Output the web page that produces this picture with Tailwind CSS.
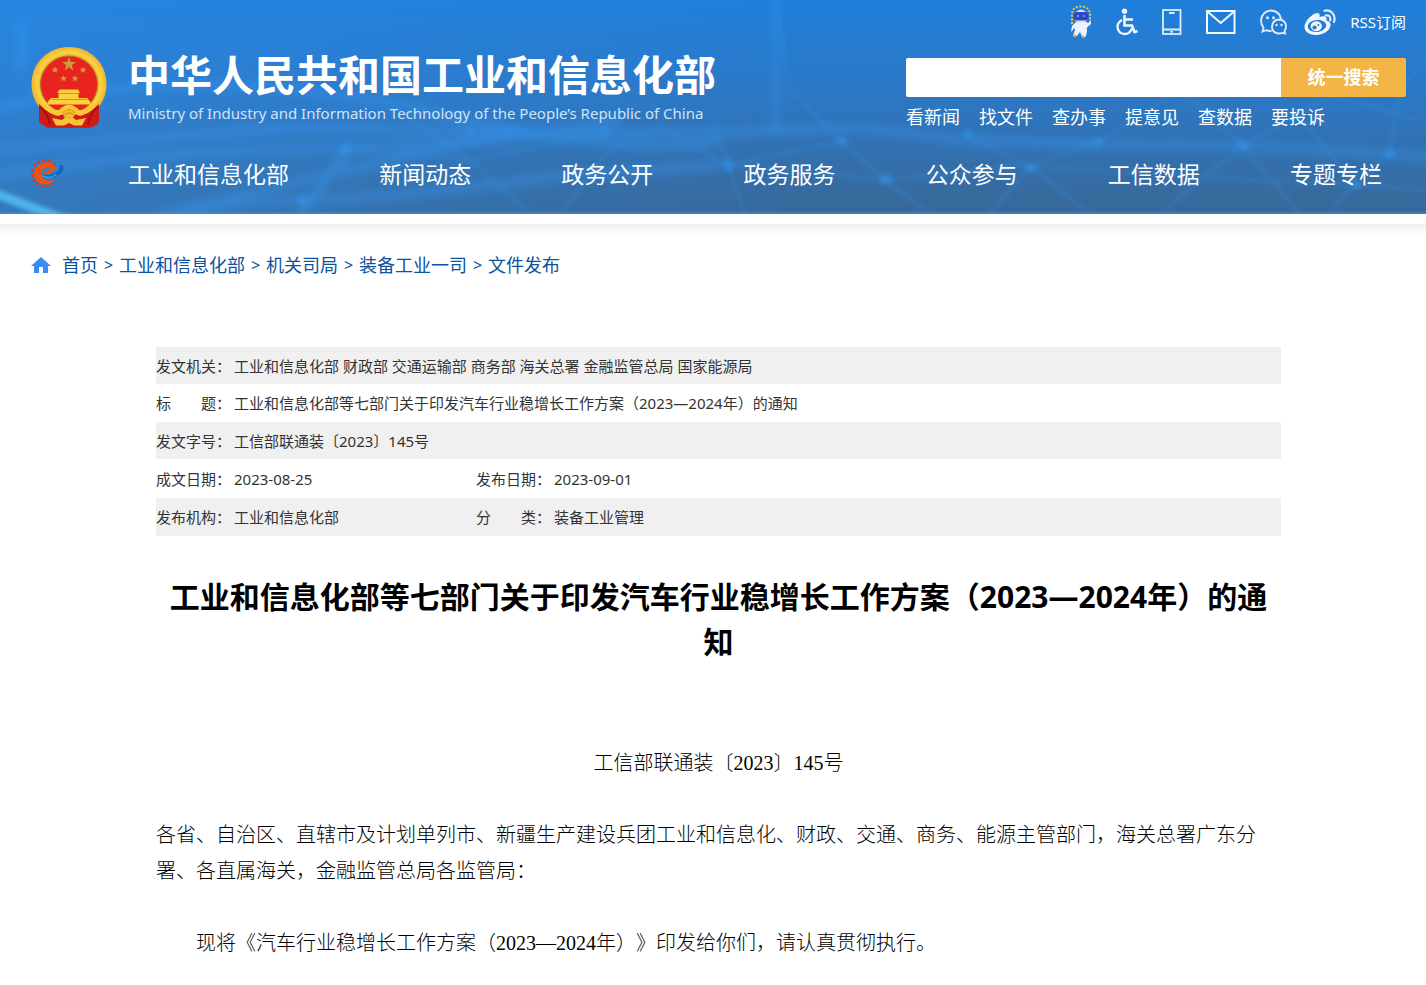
<!DOCTYPE html>
<html lang="zh-CN">
<head>
<meta charset="utf-8">
<meta name="viewport" content="width=device-width, initial-scale=1">
<title>工业和信息化部等七部门关于印发汽车行业稳增长工作方案（2023—2024年）的通知</title>
<script src="https://cdn.jsdelivr.net/npm/@tailwindcss/browser@4"></script>
</head>
<body class="bg-white font-['Noto_Sans','Noto_Sans_CJK_SC',sans-serif] text-[#333333] [text-spacing-trim:space-all]">

<header class="relative overflow-hidden bg-linear-to-b from-[#1e7fdb] via-[#2d76c0] to-[#386898] text-white">
  <!-- network backdrop -->
  <svg class="absolute inset-0 h-full w-full" viewBox="0 0 1426 214" preserveAspectRatio="none" aria-hidden="true">
    <defs>
      <filter id="soft" x="-20%" y="-20%" width="140%" height="140%"><feGaussianBlur stdDeviation="4"/></filter>
      <filter id="beam" filterUnits="userSpaceOnUse" x="0" y="-20" width="1426" height="240"><feGaussianBlur stdDeviation="4"/></filter>
      <filter id="fine" x="-20%" y="-20%" width="140%" height="140%"><feGaussianBlur stdDeviation="2"/></filter>
      <linearGradient id="left" x1="0" x2="1" y1="0" y2="0"><stop offset="0" stop-color="#2f8ce6" stop-opacity=".45"/><stop offset="1" stop-color="#2f8ce6" stop-opacity="0"/></linearGradient>
      <linearGradient id="base" x1="0" x2="0" y1="0" y2="1"><stop offset="0" stop-color="#5b9fe0" stop-opacity="0"/><stop offset="1" stop-color="#5b9fe0" stop-opacity=".5"/></linearGradient>
    </defs>
    <rect width="800" height="214" fill="url(#left)"/>
    <g filter="url(#soft)" fill="none" stroke="#3593ee" stroke-opacity=".4" stroke-width="9">
      <path d="M-10 150L150 138L300 128L480 132L600 134L720 132L860 128L980 142L1100 145L1240 146L1390 154L1440 158"/>
      <path d="M-10 110Q200 60 420 110T720 140"/>
      <path d="M-10 176Q160 150 330 148T620 120"/>
      <path d="M180 214Q240 200 310 200T560 176L720 165"/>
      <path d="M160 214L520 130M300 214L350 150"/>
    </g>
    <g filter="url(#fine)" fill="none" stroke="#3a92e6" stroke-opacity=".3" stroke-width="3">
      <path d="M713 120L728 165L745 214M728 165L842 141L886 180L930 214M842 141L790 90L776 0M968 136L1030 166L1090 214M1098 142L1030 166L990 214M1098 142L1180 90L1243 146L1200 180L1160 214M1243 146L1300 214M1243 146L1330 95L1420 120M1390 154L1400 90L1426 60M1390 154L1350 190L1330 214M968 136L1098 142M1000 165L1180 176L1356 185L1426 190M1030 166L886 180L728 165M1290 105L1356 185"/>
      <path d="M560 214L610 150L660 128L728 165M470 160L530 214M340 148L470 160L600 134M350 140L300 214M400 110L470 160"/>
    </g>
    <g filter="url(#fine)" fill="#3196ee" fill-opacity=".55">
      <circle cx="728" cy="165" r="6"/><circle cx="842" cy="141" r="5"/><circle cx="886" cy="179" r="6"/><circle cx="968" cy="134" r="5"/>
      <circle cx="1030" cy="168" r="5"/><circle cx="1098" cy="142" r="5"/><circle cx="1243" cy="145" r="5"/><circle cx="1390" cy="154" r="5"/>
      <circle cx="1356" cy="185" r="5"/><circle cx="470" cy="131" r="4"/><circle cx="605" cy="131" r="4"/><circle cx="302" cy="200" r="5"/><circle cx="345" cy="149" r="5"/>
    </g>
    <path filter="url(#beam)" d="M776 0V132" stroke="#3a93ea" stroke-opacity=".3" stroke-width="10"/>
    <path filter="url(#beam)" d="M22 20V70" stroke="#2f94f2" stroke-opacity=".4" stroke-width="14"/>
    <path filter="url(#fine)" d="M-6 193L66 220" stroke="#56bff5" stroke-opacity=".85" stroke-width="9"/>
    <rect y="211" width="1426" height="3" fill="url(#base)"/>
  </svg>

  <div class="relative pr-5 pl-[30px]">
    <div class="flex h-11 items-center justify-end gap-4">
      <div class="flex items-center gap-6">
        <a href="#" aria-label="智能机器人">
          <svg class="h-[34px] w-[22px]" viewBox="0 0 22 34">
            <g stroke="#e9c63c" stroke-width="2" stroke-dasharray="2 1.6" fill="none"><path d="M2 19V10Q2 1.5 11 1.500Q20 1.500 20 10V15"/></g>
            <path d="M6 17Q11 15.500 16 17L18.500 18L20.500 14.500L21 19L17 22.500L17 27L15.500 32L11.500 30.500L10 27L7 31L3 30L5 25L4.500 23L1 27L2 21Z" fill="#eef2fb"/>
            <path d="M5 8Q11 1 17 8L18 13Q16 18 11 18Q6 18 4 13Z" fill="#dfe6f6"/>
            <rect x="3.500" y="7" width="15" height="8.500" rx="4" fill="#3144c4"/>
            <circle cx="8" cy="11" r="1.300" fill="#3d9cf0"/><circle cx="14" cy="11" r="1.300" fill="#3d9cf0"/>
            <path d="M3 30L6 31.500M12 30.500L14 33" stroke="#e3b257" stroke-width="2"/>
          </svg>
        </a>
        <a href="#" aria-label="无障碍">
          <svg class="h-7 w-[22px]" viewBox="0 0 22 28" fill="none" stroke="#f2f7fd" stroke-width="2.600">
            <circle cx="8.500" cy="3.300" r="2.700" fill="#f2f7fd" stroke="none"/>
            <path d="M8.500 7V17.500H16L18.500 24L21.500 23M8.500 11.500H17"/>
            <path d="M6 12Q1.500 14.500 1.500 19Q2 25.500 8.500 26Q14 26 15.800 20.500" stroke-width="2.300"/>
          </svg>
        </a>
        <a href="#" aria-label="手机版">
          <svg class="h-[26px] w-5" viewBox="0 0 20 26" fill="none" stroke="#dcecfc" stroke-width="1.800">
            <rect x="1" y="1" width="17.500" height="24"/><path d="M1 20.500H18.500M7 4H12.500"/><path d="M8.300 22.800H11" stroke-width="1.700"/>
          </svg>
        </a>
        <a href="#" aria-label="邮箱">
          <svg class="h-6 w-[30px]" viewBox="0 0 30 24" fill="none" stroke="#f2f7fd" stroke-width="2">
            <rect x="1" y="1" width="27.500" height="22"/><path d="M2 2L14.750 13L27.500 2"/>
          </svg>
        </a>
        <a href="#" aria-label="微信">
          <svg class="h-[26px] w-7" viewBox="0 0 28 26" fill="none" stroke="#dcecfc" stroke-width="1.900">
            <path d="M11.500 22Q8.500 22.300 6.500 21.200L2.500 22.500L3.500 18.500Q1 15.500 1 11.500Q2 2 11 1.500Q19.500 2 21 10"/>
            <path d="M19 10.500Q26 11.200 26 17.500Q26 20.500 24.500 22L25.200 24.500L22.300 23.900Q20.500 24.800 18 24.500Q12 23.500 12 17.500Q12.500 11.200 19 10.500Z"/>
            <g fill="#dcecfc" stroke="none"><circle cx="7.500" cy="8.800" r="1.500"/><circle cx="13.500" cy="8.800" r="1.500"/><circle cx="16.500" cy="16" r="1.200"/><circle cx="21.500" cy="16" r="1.200"/></g>
          </svg>
        </a>
      </div>
      <div class="flex items-center gap-[14px]">
        <a href="#" aria-label="微博">
          <svg class="h-[26px] w-8" viewBox="0 0 32 26">
            <path fill="#f2f7fd" fill-rule="evenodd" d="M11 4.500C14 3 16.500 4.500 15.500 8C19 6.500 23.500 6.500 22.500 11.500C26 12.500 27.500 15 26 18.500C23 24 17 26 12 26C6 26 0.500 23 0.500 18C0.500 13 6 7 11 4.500ZM13 11C8 11.200 3.800 14 3.800 17.500C4 21.300 8.300 23.300 13 22.900C18.500 22.500 22.300 19.500 22.200 16C21.800 12.500 17.500 10.800 13 11Z"/>
            <ellipse cx="12.300" cy="17.300" rx="5.600" ry="5" fill="#f2f7fd"/><circle cx="10.500" cy="18.500" r="2.100" fill="#2a7bd0"/><circle cx="14.300" cy="16" r="1.100" fill="#2a7bd0"/>
            <path d="M21.500 6.500Q27 5.500 26.200 11.500M20.500 1.800Q24.500.500 28 3.500Q31.800 7.500 30 13" fill="none" stroke="#dcecfc" stroke-width="2.200" stroke-linecap="round"/>
          </svg>
        </a>
        <a href="#" class="text-[15px] leading-5">RSS订阅</a>
      </div>
    </div>

    <div class="flex items-start justify-between">
      <a href="#" class="flex items-start">
        <svg class="mt-[2px] mr-5 h-[82px] w-[78px] shrink-0" viewBox="0 0 78 82" role="img" aria-label="国徽">
          <defs><radialGradient id="gold"><stop offset=".7" stop-color="#d99a1e"/><stop offset=".84" stop-color="#fbd346"/><stop offset="1" stop-color="#eeb52c"/></radialGradient></defs>
          <path d="M9 56H69L68 78L61 81.500H17L11 78Z" fill="#cf1a17"/>
          <path d="M39 1C60 1 76.500 17 76.500 38C76.500 56 65 68 52 74H26C13 68 1.500 56 1.500 38C1.500 17 18 1 39 1Z" fill="url(#gold)"/>
          <circle cx="39" cy="38.500" r="28.500" fill="#e92420" stroke="#b9751a" stroke-width="1"/>
          <g fill="#cf9b37"><path d="M39 11l1.800 5H46l-4.200 3.200 1.600 5.200-4.400-3.100-4.400 3.100 1.600-5.200L32 16h5.200z"/>
            <path d="M25 20.500l1 2.300h2.500l-2 1.600.8 2.500-2.300-1.500-2.300 1.500.8-2.500-2-1.600H24z"/>
            <path d="M53 20.500l1 2.300h2.500l-2 1.600.8 2.500-2.300-1.500-2.300 1.500.8-2.500-2-1.600H52z"/>
            <path d="M33.500 29l1 2.300h2.500l-2 1.600.8 2.500-2.300-1.500-2.300 1.500.8-2.500-2-1.600h2.500z"/>
            <path d="M45 29l1 2.300h2.500l-2 1.600.8 2.500-2.300-1.500-2.300 1.500.8-2.500-2-1.600h2.500z"/></g>
          <path d="M30 43.500H48L50 46.500H48.500V52H57L60.500 56V58.500H17.500V56L21 52H28.500V46.500H27Z" fill="#fcd13d"/>
          <path d="M28.500 47.500H49.500M22 53.500H57" stroke="#dd8e20" stroke-width="1"/>
          <path d="M9 58L9 76L18 81.500H60L69 76V58Q58 68 50 70L39 66L28 70Q19 68 9 58Z" fill="#cf1a17"/>
          <path d="M14 59Q22 68 30 66Q39 56 48 66Q56 68 64 59" fill="none" stroke="#f8c738" stroke-width="4.500"/>
          <path d="M22 72L32 74L39 68L46 74L56 72L52 79.500H44L39 77L34 79.500H26Z" fill="#f6c437"/>
          <ellipse cx="39" cy="68" rx="6" ry="4.500" fill="#f3ba2d"/>
          <path d="M33 70Q39 64 45 70" fill="none" stroke="#c58a1c"/>
          <path d="M10 61Q18 67 20 78M68 61Q60 67 58 78" stroke="#a60f10" stroke-width="2" fill="none"/>
        </svg>
        <span class="flex flex-col gap-px pt-[6px]">
          <span class="text-[42px] leading-[50px] font-bold whitespace-nowrap">中华人民共和国工业和信息化部</span>
          <span class="text-[15px] leading-6 whitespace-nowrap text-[#cfe3f8]" lang="en">Ministry of Industry and Information Technology of the People’s Republic of China</span>
        </span>
      </a>

      <div class="w-[500px] shrink-0 pt-[14px]">
        <form class="flex h-[39px] overflow-hidden rounded-xs" onsubmit="return false">
          <input type="text" aria-label="搜索内容" class="min-w-0 flex-1 bg-white px-3 text-[18px] text-[#333333] outline-none">
          <button type="submit" class="w-[125px] bg-[#f3b545] text-[18px] font-bold text-white">统一搜索</button>
        </form>
        <nav aria-label="快捷入口" class="mt-[6px] flex gap-[19px] text-[18px] leading-7">
          <a href="#">看新闻</a><a href="#">找文件</a><a href="#">查办事</a><a href="#">提意见</a><a href="#">查数据</a><a href="#">要投诉</a>
        </nav>
      </div>
    </div>

    <div class="mt-[21px] flex h-[62px] items-start">
      <a href="#" aria-label="工信标志" class="mr-16 w-[34px] shrink-0 pt-[6px]">
        <svg class="h-[31px] w-[34px]" viewBox="0 0 34 31">
          <path d="M24.500 6.500A13 13 0 1 0 24 25" fill="none" stroke="#d93a20" stroke-width="2.800" stroke-dasharray="2.700 2.500"/>
          <path d="M25 9C24 4.500 19 3.500 14.500 4.500C8 6 4 11 4 16.500C4.500 23 9.500 26.500 15 26.500C19 26.500 23 24.500 25 22C18.500 23.500 11.500 22 11 16.500C11 12 15.500 8.500 19.500 9C22 9.500 20 12.500 14.500 14L13.500 16.500C20 16.500 25.500 13.500 25 9Z" fill="#f4510f"/>
          <path d="M11.500 16.500C13 20.500 20 21.500 26 18.500C31 16 34 12 33.500 8.500C33 7 30.500 6.800 28.500 7.200C31 8.500 30 11.500 27 14C23 17 17 18 14 16.500Z" fill="#0b68b8"/>
          <path d="M12 17.500C16 20.500 22 20 26.500 16.500" fill="none" stroke="#35a9ee" stroke-width="1.500"/>
        </svg>
      </a>
      <nav aria-label="主导航" class="flex flex-1 justify-between pr-6 text-[23px] leading-[44px] whitespace-nowrap">
        <a href="#">工业和信息化部</a><a href="#">新闻动态</a><a href="#">政务公开</a><a href="#">政务服务</a><a href="#">公众参与</a><a href="#">工信数据</a><a href="#">专题专栏</a>
      </nav>
    </div>
  </div>
</header>

<div class="mt-[10px] h-3 bg-linear-to-b from-[#edf1f5] to-white"></div>

<nav aria-label="面包屑" class="mt-[15px] flex items-center px-[31px] text-[18px] leading-7 text-[#0d529f]">
  <svg class="mr-[11px] h-4 w-5" viewBox="0 0 20 16" fill="#3b8bf6" aria-hidden="true"><path d="M10 0L20 9H17V16H12V10H8V16H3V9H0Z"/></svg>
  <a href="#">首页</a><span class="w-[21px] text-center text-[16px]">&gt;</span>
  <a href="#">工业和信息化部</a><span class="w-[21px] text-center text-[16px]">&gt;</span>
  <a href="#">机关司局</a><span class="w-[21px] text-center text-[16px]">&gt;</span>
  <a href="#">装备工业一司</a><span class="w-[21px] text-center text-[16px]">&gt;</span>
  <a href="#">文件发布</a>
</nav>

<main class="mt-[68px] pr-[145px] pb-6 pl-[156px]">
  <table class="w-full table-fixed border-collapse text-left text-[15px] leading-5">
    <colgroup><col class="w-[78px]"><col class="w-[242px]"><col class="w-[78px]"><col></colgroup>
    <tbody>
      <tr class="h-[37px] bg-[#f0f0f0]"><th scope="row" class="font-normal whitespace-nowrap">发文机关：</th><td colspan="3">工业和信息化部 财政部 交通运输部 商务部 海关总署 金融监管总局 国家能源局</td></tr>
      <tr class="h-[38px]"><th scope="row" class="font-normal whitespace-nowrap">标　　题：</th><td colspan="3">工业和信息化部等七部门关于印发汽车行业稳增长工作方案（2023—2024年）的通知</td></tr>
      <tr class="h-[37px] bg-[#f0f0f0]"><th scope="row" class="font-normal whitespace-nowrap">发文字号：</th><td colspan="3">工信部联通装〔2023〕145号</td></tr>
      <tr class="h-[39px]"><th scope="row" class="font-normal whitespace-nowrap">成文日期：</th><td>2023-08-25</td><th scope="row" class="font-normal whitespace-nowrap">发布日期：</th><td>2023-09-01</td></tr>
      <tr class="h-[38px] bg-[#f0f0f0]"><th scope="row" class="font-normal whitespace-nowrap">发布机构：</th><td>工业和信息化部</td><th scope="row" class="font-normal whitespace-nowrap">分　　类：</th><td>装备工业管理</td></tr>
    </tbody>
  </table>

  <h1 class="mt-[38px] text-center text-[30px] leading-[45px] font-bold text-black">工业和信息化部等七部门关于印发汽车行业稳增长工作方案（2023—2024年）的通知</h1>

  <article class="mt-[81px] text-[20px] leading-9 font-light text-black font-['Liberation_Serif','Noto_Sans_CJK_SC',serif]">
    <p class="text-center">工信部联通装〔2023〕145号</p>
    <p class="mt-9">各省、自治区、直辖市及计划单列市、新疆生产建设兵团工业和信息化、财政、交通、商务、能源主管部门，海关总署广东分署、各直属海关，金融监管总局各监管局：</p>
    <p class="mt-9 indent-[40px]">现将《汽车行业稳增长工作方案（2023—2024年）》印发给你们，请认真贯彻执行。</p>
  </article>
</main>
</body>
</html>
